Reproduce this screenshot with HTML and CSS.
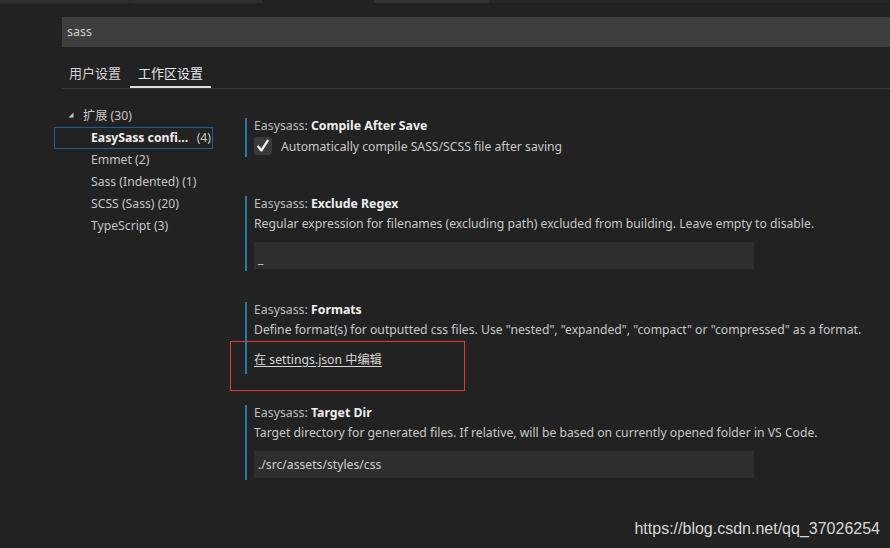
FILE: index.html
```html
<!DOCTYPE html>
<html>
<head>
<meta charset="utf-8">
<link rel="stylesheet" href="styles.css">
</head>
<body>
<div class="tabstrip">
  <div class="etab t1"></div>
  <div class="etab t2"></div>
  <div class="etab t3"></div>
  <div class="etab t4"></div>
  <div class="etab t5"></div>
</div>
<div class="editor">
  <div class="search">sass</div>
  <div class="scopes">
    <div class="scope">用户设置</div>
    <div class="scope active">工作区设置</div>
  </div>
  <div class="body">
    <div class="tree">
      <div class="row group"><svg class="twistie" width="6" height="6" viewBox="0 0 6 6"><polygon points="5.5,0.5 5.5,5.5 0.5,5.5" fill="#c5c5c5"/></svg><span>扩展 (30)</span></div>
      <div class="row item selected"><span class="name">EasySass confi...</span><span class="count">(4)</span></div>
      <div class="row item"><span class="name">Emmet (2)</span></div>
      <div class="row item"><span class="name">Sass (Indented) (1)</span></div>
      <div class="row item"><span class="name">SCSS (Sass) (20)</span></div>
      <div class="row item"><span class="name">TypeScript (3)</span></div>
    </div>
    <div class="settings">
      <div class="setting first">
        <div class="title"><span class="cat">Easysass: </span><span class="key">Compile After Save</span></div>
        <div class="check-row">
          <span class="checkbox"><svg width="18" height="18" viewBox="0 0 18 18"><path d="M4.2 9.6 L7.4 13.4 L13.6 3.8" fill="none" stroke="#f0f0f0" stroke-width="2.4" stroke-linecap="round" stroke-linejoin="round"/></svg></span>
          <span class="desc">Automatically compile SASS/SCSS file after saving</span>
        </div>
      </div>
      <div class="setting">
        <div class="title"><span class="cat">Easysass: </span><span class="key">Exclude Regex</span></div>
        <div class="desc line">Regular expression for filenames (excluding path) excluded from building. Leave empty to disable.</div>
        <div class="input"><span class="val caret">_</span></div>
      </div>
      <div class="setting">
        <div class="title"><span class="cat">Easysass: </span><span class="key">Formats</span></div>
        <div class="desc line">Define format(s) for outputted css files. Use "nested", "expanded", "compact" or "compressed" as a format.</div>
        <div class="link-row"><a class="link">在 settings.json 中编辑</a></div>
      </div>
      <div class="setting">
        <div class="title"><span class="cat">Easysass: </span><span class="key">Target Dir</span></div>
        <div class="desc line">Target directory for generated files. If relative, will be based on currently opened folder in VS Code.</div>
        <div class="input"><span class="val">./src/assets/styles/css</span></div>
      </div>
    </div>
  </div>
</div>
<div class="annotation"></div>
<div class="watermark">https://blog.csdn.net/qq_37026254</div>
</body>
</html>
```
FILE: styles.css
```css
html, body {
  margin: 0;
  padding: 0;
  background: #222222;
  width: 890px;
  height: 548px;
  overflow: hidden;
  font-family: "Noto Sans", "Noto Sans CJK SC", sans-serif;
  font-size: 12.2px;
  color: #cccccc;
}

.tabstrip {
  display: flex;
  height: 3px;
}
.etab { height: 3px; }
.t1 { width: 129px; background: #2e2e2e; border-right: 1px solid #262626; }
.t2 { width: 132px; background: #2e2e2e; }
.t3 { width: 112px; background: #222222; }
.t4 { width: 115px; background: #333333; }
.t5 { flex: 1; background: #262626; }

.editor {
  padding-left: 62px;
}

.search {
  margin-top: 14px;
  height: 30px;
  line-height: 30px;
  background: #3e3e3e;
  padding-left: 5px;
  color: #d0d0d0;
  font-size: 12.5px;
}

.scopes {
  display: flex;
  margin-top: 11px;
  height: 30px;
  border-bottom: 1px solid #3a3a3a;
  font-family: "Noto Sans CJK SC", sans-serif;
  font-size: 13px;
}
.scope {
  width: 61px;
  padding-left: 7px;
  line-height: 30px;
  color: #d4d4d4;
}
.scope.active {
  width: 73px;
  padding-left: 8px;
  color: #e8e8e8;
  box-shadow: inset 0 -2px 0 #e0e0e0;
}

.body {
  display: flex;
  margin-left: -8px;
  margin-top: 15px;
}

.tree {
  width: 159px;
  flex: none;
  margin-top: 1px;
}
.row {
  height: 22px;
  line-height: 22px;
  box-sizing: border-box;
  display: flex;
  align-items: center;
  color: #c5c5c5;
}
.row.group {
  padding-left: 14px;
}
.twistie { margin-right: 9px; margin-top: -2px; }
.row.item {
  padding-left: 37px;
}
.row.selected {
  border: 1px solid #1f5e8c;
  padding-left: 36px;
  padding-right: 1px;
  justify-content: space-between;
}
.row.selected .name {
  font-weight: bold;
  color: #f0f0f0;
}
.row.selected .count { color: #c5c5c5; }

.settings {
  margin-left: 32px;
  flex: 1;
  margin-top: 14px;
}
.setting {
  border-left: 2px solid #2b7aa3;
  padding-left: 7px;
  padding-bottom: 2px;
  margin-bottom: 31px;
}
.setting.first { margin-bottom: 39px; padding-bottom: 1px; }

.title {
  line-height: 15px;
  height: 16px;
  font-size: 12.3px;
}
.cat { color: #bdbdbd; }
.key { color: #eeeeee; font-weight: bold; }

.desc { color: #c8c8c8; }
.line {
  margin-top: 2px;
  line-height: 20px;
  height: 20px;
  white-space: nowrap;
}

.check-row {
  margin-top: 2px;
  height: 20px;
  display: flex;
  align-items: center;
}
.checkbox {
  width: 18px;
  height: 18px;
  border-radius: 3px;
  background: #3a3a3a;
  margin-right: 9px;
  display: flex;
}

.input {
  margin-top: 8px;
  width: 496px;
  height: 27px;
  background: #2e2e2e;
  padding-left: 4px;
  line-height: 27px;
  color: #d0d0d0;
}
.caret { position: relative; top: 3px; }

.link-row {
  margin-top: 8px;
  height: 24px;
  line-height: 24px;
}
.link {
  color: #d6d6d6;
  text-decoration: underline;
  text-underline-offset: 2px;
}

.annotation {
  position: absolute;
  left: 230px;
  top: 341px;
  width: 233px;
  height: 48px;
  border: 1px solid #e53935;
}

.watermark {
  position: absolute;
  right: 10px;
  top: 520px;
  font-family: "Liberation Sans", Arial, sans-serif;
  font-size: 16px;
  color: #d8d8d8;
}
```
